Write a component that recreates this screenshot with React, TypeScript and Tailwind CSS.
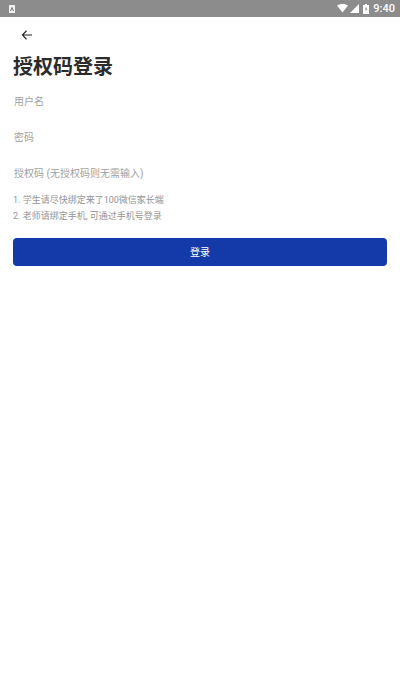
import React from "react";

const font = { fontFamily: '"Roboto", "Noto Sans CJK SC", sans-serif' };

const StatusBar = () => (
  <div className="h-[17px] bg-[#8c8c8c] flex items-center justify-between pl-[9px] pr-[5px]">
    <svg width="6" height="8" viewBox="0 0 6 8">
      <rect width="6" height="8" rx="0.5" fill="#f2f2f2" />
      <path d="M3 1.5 L5 6 H4 L3 4 L2 6 H1 Z" fill="#777" />
    </svg>
    <div className="flex items-center text-white">
      <svg width="11" height="9" viewBox="0 0 11 9" className="mr-[2px]">
        <path d="M0 1.6 C3 -0.5 8 -0.5 11 1.6 L5.5 8.6 Z" fill="#fff" />
      </svg>
      <svg width="9" height="9" viewBox="0 0 9 9" className="mr-[4px]">
        <path d="M0 9 L9 0 V9 Z" fill="#fff" />
      </svg>
      <svg width="6" height="10" viewBox="0 0 6 10" className="mr-[4px]">
        <path d="M2 0 H4 V1 H6 V10 H0 V1 H2 Z" fill="#fff" />
        <path d="M3.4 2.5 L1.8 5.6 H2.8 L2.6 7.8 L4.2 4.6 H3.2 Z" fill="#8c8c8c" />
      </svg>
      <span className="text-[11px] font-medium leading-none">9:40</span>
    </div>
  </div>
);

const Field = ({ label }: { label: string }) => (
  <div className="h-9 pl-px flex items-center text-[10px] text-[#a0a0a0]">{label}</div>
);

export default function App() {
  return (
    <div style={font} className="w-[400px] h-[690px] bg-white flex flex-col overflow-hidden">
      <StatusBar />
      <div className="flex flex-col px-[13px]">
        {/* back */}
        <div className="h-[36px] flex items-center pl-[8px]">
          <svg width="12" height="12" viewBox="0 0 24 24" fill="none" stroke="#222" strokeWidth="2.2">
            <path d="M22 12 H3 M11 3.5 L2.8 12 L11 20.5" />
          </svg>
        </div>
        <h1 className="text-[20px] leading-[28px] font-bold text-[#2b2b2b] mb-[2px]">授权码登录</h1>
        <Field label="用户名" />
        <Field label="密码" />
        <Field label="授权码 (无授权码则无需输入)" />
        <div className="mt-[1px] text-[9px] leading-4 text-[#949494]">
          <p>1. 学生请尽快绑定来了100微信家长端</p>
          <p>2. 老师请绑定手机, 可通过手机号登录</p>
        </div>
        <button className="mt-[14px] h-7 w-full rounded-[4px] bg-[#1439a8] text-white text-[10px] flex items-center justify-center">
          登录
        </button>
      </div>
    </div>
  );
}
